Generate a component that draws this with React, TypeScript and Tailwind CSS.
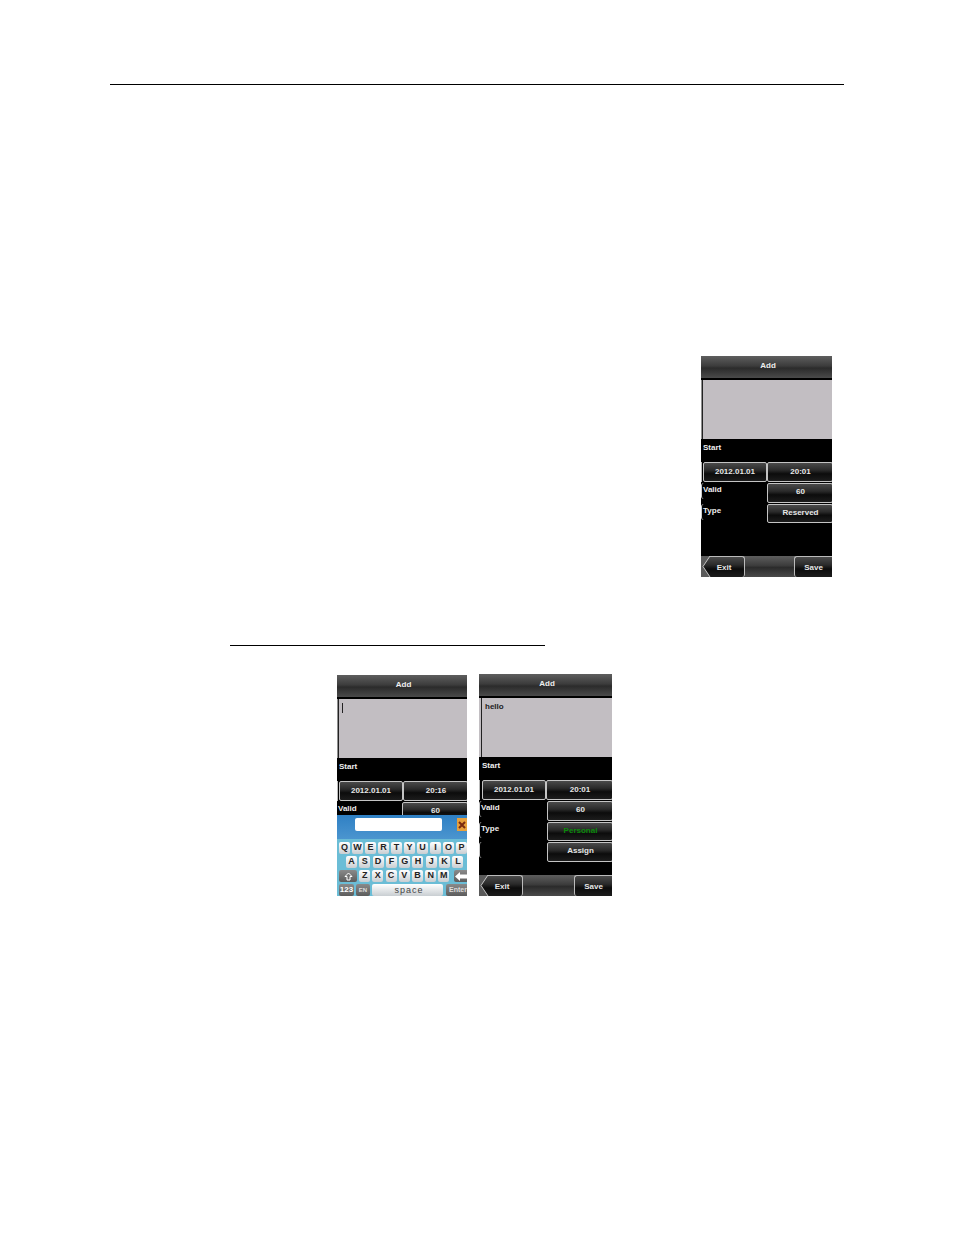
import { ReactNode } from 'react';

const barBg = 'bg-[linear-gradient(#5e5e5e_0%,#3c3c3c_45%,#2b2b2b_55%,#4a4a4a_100%)]';
const btnBg = 'bg-[linear-gradient(#4a4a4a_0%,#2a2a2a_40%,#0c0c0c_60%,#1c1c1c_100%)]';
const greyKey = '!bg-[linear-gradient(#8a8a8a,#5c5c5c)]';

const Header = () => (
  <div className={`h-[22px] shrink-0 flex items-center justify-center pl-[3px] pb-[2px] text-[8px] font-bold text-[#eee] ${barBg}`}>
    Add
  </div>
);

const Notes = ({ children, wide }: { children?: ReactNode; wide?: boolean }) => (
  <div className="h-[59px] shrink-0 mt-[2px] flex">
    <div className={wide ? 'w-[2px] bg-[#c2bec2]' : 'w-[1px] bg-[#8f8f8f]'} />
    <div className="flex-1 bg-[#c2bec2] border-l border-[#222] px-[3px] py-[4px] text-[8px] font-bold text-[#222] leading-[10px]">
      {children}
    </div>
  </div>
);

const Label = ({ text, wide }: { text: string; wide?: boolean }) => (
  <div className={`h-[23px] shrink-0 flex items-center pb-[5px] text-[8px] font-bold text-[#eee] ${wide ? 'pl-[3px]' : 'pl-[2px]'}`}>
    {text}
  </div>
);

const Btn = ({ text, green, className }: { text: string; green?: boolean; className: string }) => (
  <div
    className={`flex items-center justify-center pb-px border border-[#c4c4c4] rounded-[2px] text-[8px] font-bold ${btnBg} ${green ? 'text-[#0a8a0a]' : 'text-[#e6e6e6]'} ${className}`}
  >
    {text}
  </div>
);

const DateRow = ({ time, wide }: { time: string; wide?: boolean }) => (
  <div className="h-[20px] shrink-0 flex">
    <div className={`border-l border-[#bbb] ${wide ? 'w-[3px]' : 'w-[2px]'}`} />
    <Btn text="2012.01.01" className="w-[64px] h-full" />
    <Btn text={time} className="flex-1 h-full pl-px -mr-px" />
  </div>
);

const FieldRow = ({ label, value, green }: { label: string; value: string; green?: boolean }) => (
  <div className="h-[19.6px] mt-[1px] shrink-0 flex">
    <div className="flex-1">
      <div className="h-[16px] border-l border-[#ccc] rounded-l-[3px] pl-[1px] text-[8px] font-bold text-[#eee] leading-[14px]">
        {label}
      </div>
    </div>
    <Btn text={value} green={green} className="w-[66px] h-full pl-px -mr-px" />
  </div>
);

const Footer = () => (
  <div className={`h-[21px] shrink-0 mt-auto flex justify-between ${barBg}`}>
    <div className={`relative w-[44px] flex items-center justify-center pl-[3px] pt-px border-r border-t border-[#bbb] rounded-r-[3px] text-[8px] font-bold text-[#e6e6e6] ${btnBg}`}>
      <svg className="absolute left-0 -top-px" width="10" height="21" viewBox="0 0 10 21">
        <path d="M0 0H9L2 10.5L9 21H0Z" fill="#5a5a5a" />
        <path d="M9 0L2 10.5L9 21" fill="none" stroke="#c4c4c4" strokeWidth="1" />
      </svg>
      Exit
    </div>
    <div className={`w-[38px] flex items-center justify-center pt-px border-l border-t border-[#bbb] rounded-l-[3px] text-[8px] font-bold text-[#e6e6e6] ${btnBg}`}>
      Save
    </div>
  </div>
);

const keyRows = ['QWERTYUIOP', 'ASDFGHJKL', 'ZXCVBNM'];

const Key = ({ k, className }: { k: ReactNode; className?: string }) => (
  <div
    className={`h-[12px] flex items-center justify-center rounded-[2px] bg-[linear-gradient(#fff,#c9ced2)] text-[9px] font-bold text-[#222] shrink-0 ${className ?? 'w-[11px]'}`}
  >
    {k}
  </div>
);

const Keyboard = () => (
  <div className="flex-1 flex flex-col overflow-hidden">
    <div className="h-[24px] shrink-0 flex items-start pt-[3px] bg-[linear-gradient(#2f80c4,#4b95cf)] pl-[18px]">
      <div className="w-[88px] h-[13px] bg-white rounded-[2px]" />
      <div className="ml-[15px] w-[10px] h-[13px] bg-[#e8a13c] flex items-center justify-center">
        <svg width="8" height="8" viewBox="0 0 8 8">
          <path d="M1 1L7 7M7 1L1 7" stroke="#7a2a10" strokeWidth="2" />
        </svg>
      </div>
    </div>
    <div className="flex-1 bg-[#6bbdd6] overflow-hidden pt-[3px] flex flex-col gap-[2px]">
      <div className="flex gap-[2px] pl-[2px]">
        {keyRows[0].split('').map((k) => <Key key={k} k={k} />)}
      </div>
      <div className="flex gap-[2.3px] pl-[9px]">
        {keyRows[1].split('').map((k) => <Key key={k} k={k} />)}
      </div>
      <div className="flex gap-[2.2px] pl-[2px]">
        <Key
          className={`w-[18px] ${greyKey}`}
          k={
            <svg width="9" height="9" viewBox="0 0 9 9">
              <path d="M4.5 1L8 4.5H6V8H3V4.5H1Z" fill="none" stroke="#fff" strokeWidth="1" />
            </svg>
          }
        />
        {keyRows[2].split('').map((k) => <Key key={k} k={k} />)}
        <Key
          className={`w-[16px] ml-[2px] ${greyKey}`}
          k={
            <svg width="13" height="9" viewBox="0 0 13 9">
              <path d="M0 4.5L5 0V2.5H13V6.5H5V9Z" fill="#fff" />
            </svg>
          }
        />
      </div>
      <div className="flex gap-[2px] pl-[2px]">
        <Key k="123" className={`w-[15px] ${greyKey} !text-white !text-[8px]`} />
        <Key k="EN" className={`w-[14px] ${greyKey} !text-[#ddd] !text-[6px]`} />
        <Key k="space" className="w-[71px] pl-[3px] pt-px !text-[#444] !font-normal tracking-[1px]" />
        <Key k="Enter" className={`w-[22px] ml-px ${greyKey} !text-[#ddd] !text-[7px] !justify-start pl-[3px]`} />
      </div>
    </div>
  </div>
);

const Screen = ({ size, children, className }: { size: string; children: ReactNode; className?: string }) => (
  <div className={`bg-black flex flex-col overflow-hidden ${size} ${className ?? ''}`}>{children}</div>
);

export default function App() {
  return (
    <div className="w-[954px] h-[1235px] bg-white overflow-hidden font-['Liberation_Sans',Arial,sans-serif]">
      <div className="h-[84px]" />
      <div className="ml-[110px] w-[734px] h-px bg-black" />

      <div className="mt-[271px] ml-[701px]">
        <Screen size="w-[131px] h-[221px]">
          <Header />
          <Notes />
          <Label text="Start" />
          <DateRow time="20:01" />
          <FieldRow label="Valid" value="60" />
          <FieldRow label="Type" value="Reserved" />
          <Footer />
        </Screen>
      </div>

      <div className="mt-[68px] ml-[230px] w-[315px] h-px bg-black" />

      <div className="mt-[28px] ml-[337px] flex items-start gap-[12px]">
        <Screen size="w-[130px] h-[221px]" className="mt-px">
          <Header />
          <Notes>
            <div className="w-px h-[10px] bg-[#222]" />
          </Notes>
          <Label text="Start" />
          <DateRow time="20:16" />
          <div className="h-[13px] mt-[1px] shrink-0 flex overflow-hidden">
            <div className="flex-1 pl-[1px] text-[8px] font-bold text-[#eee] leading-[13px]">Valid</div>
            <Btn text="60" className="w-[66px] h-[18px] pl-px -mr-px" />
          </div>
          <Keyboard />
        </Screen>

        <Screen size="w-[133px] h-[222px]">
          <Header />
          <Notes wide>hello</Notes>
          <Label text="Start" wide />
          <DateRow time="20:01" wide />
          <FieldRow label="Valid" value="60" />
          <FieldRow label="Type" value="Personal" green />
          <FieldRow label="" value="Assign" />
          <Footer />
        </Screen>
      </div>
    </div>
  );
}
